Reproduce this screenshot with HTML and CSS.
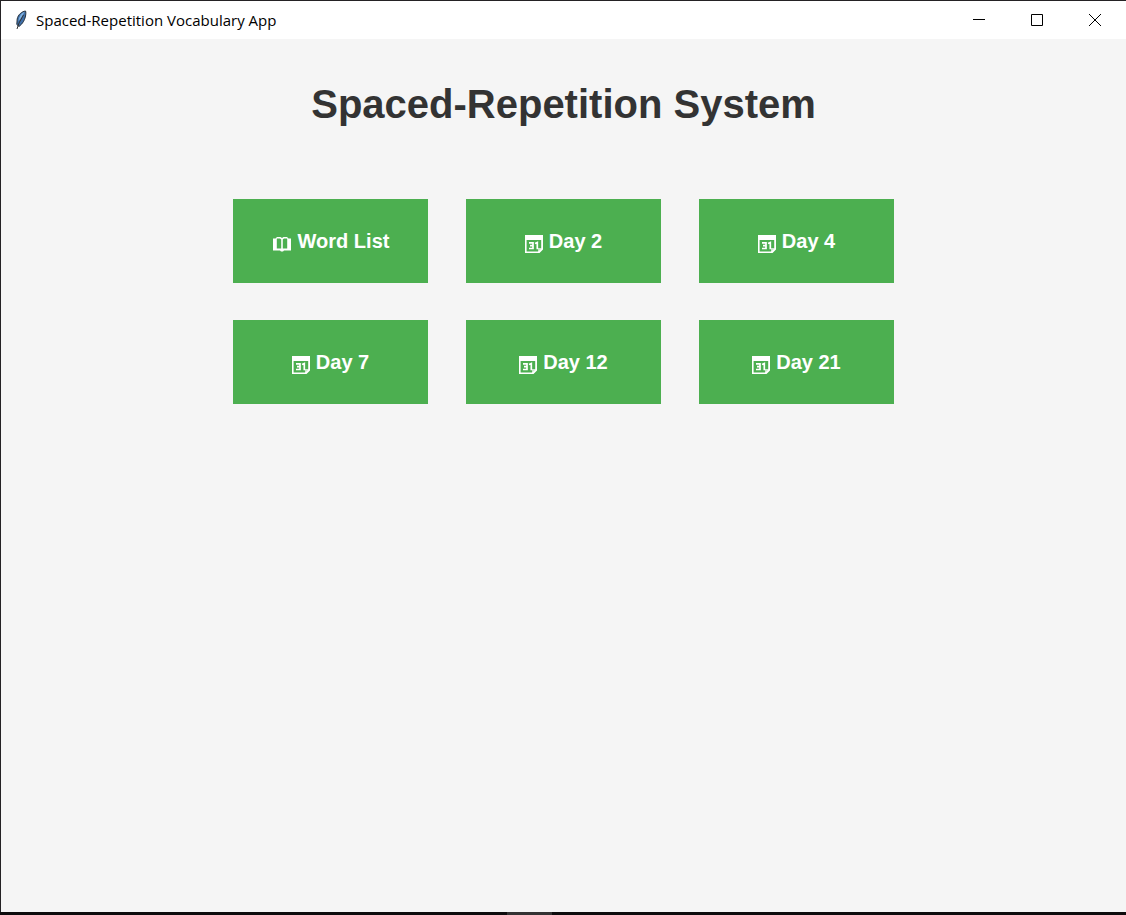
FILE: index.html
```html
<!DOCTYPE html>
<html lang="en">
<head>
<meta charset="utf-8">
<title>Spaced-Repetition Vocabulary App</title>
<link rel="stylesheet" href="styles.css">
</head>
<body>
<svg class="defs" aria-hidden="true">
  <symbol id="book" viewBox="0 0 20 16">
    <path fill="#fff" fill-rule="evenodd" d="M1 2.500H3.500L5 1H8.500L10 2L11.500 1H15L16.500 2.500H19V14.500H12L11 15.500H9L8 14.500H1ZM4.800 2.500V12.500H9.200V3.400L8 2.500ZM10.800 3.400V12.500H15.200V2.500H12Z"/>
  </symbol>
  <symbol id="calendar" viewBox="0 0 18 18">
    <path fill="#fff" fill-rule="evenodd" d="M0 0H18V14.500L14.500 18H0ZM1.600 5V16.400H13L16.200 13.500V5Z"/>
    <path fill="none" stroke="#fff" stroke-width="1.700" d="M4 7.800H8V13.500H4M5 10.600H8M10 8.500L12.300 7.500V14.300"/>
    <path fill="#fff" opacity=".7" d="M13 13H17L13 17Z"/>
  </symbol>
</svg>
<div class="window">
  <header class="titlebar">
    <svg class="feather" viewBox="0 0 14 22" aria-hidden="true">
      <path fill="#3f6fa8" stroke="#26313d" d="M11.500 2C8 2.500 4 5.500 3.200 10L2.800 15.500L5 17.500C9 14.500 10.500 11 11.300 8C12 5 12 3 11.500 2Z"/>
      <path fill="#82b4e2" d="M10.500 3C7 4 5 8 4.500 12L7 9Z"/>
      <path fill="none" stroke="#333" d="M9.500 6L5 14L3 20"/>
    </svg>
    <span class="caption">Spaced-Repetition Vocabulary App</span>
    <button class="control" aria-label="Minimize"><svg class="glyph" viewBox="0 0 12 12"><path d="M0 5.500H12"/></svg></button>
    <button class="control" aria-label="Maximize"><svg class="glyph" viewBox="0 0 12 12"><path d="M.5.5H11.500V11.500H.5Z"/></svg></button>
    <button class="control" aria-label="Close"><svg class="glyph" viewBox="0 0 12 12"><path d="M0 0L12 12M12 0L0 12"/></svg></button>
  </header>
  <main class="content">
    <h1 class="heading">Spaced-Repetition System</h1>
    <div class="grid">
      <button class="card"><svg class="book"><use href="#book"/></svg>Word List</button>
      <button class="card"><svg class="calendar"><use href="#calendar"/></svg>Day 2</button>
      <button class="card"><svg class="calendar"><use href="#calendar"/></svg>Day 4</button>
      <button class="card"><svg class="calendar"><use href="#calendar"/></svg>Day 7</button>
      <button class="card"><svg class="calendar"><use href="#calendar"/></svg>Day 12</button>
      <button class="card"><svg class="calendar"><use href="#calendar"/></svg>Day 21</button>
    </div>
  </main>
</div>
<footer class="taskbar"><div class="task"></div></footer>
</body>
</html>
```
FILE: styles.css
```css
* { box-sizing: border-box; }
body {
  margin: 0;
  min-height: 100vh;
  display: flex;
  flex-direction: column;
  background: #f5f5f5;
}
.defs { display: none; }
.window {
  flex: 1;
  border-top: 1px solid #242224;
  border-left: 1px solid #242224;
}
.titlebar {
  display: flex;
  align-items: center;
  height: 38px;
  padding: 0 2px 0 13px;
  background: #fff;
}
.feather { width: 14px; height: 22px; }
.caption {
  flex: 1;
  padding-left: 8px;
  font: 15px/20px "Open Sans", sans-serif;
  color: #000;
}
.control {
  display: flex;
  align-items: center;
  justify-content: center;
  width: 58px;
  height: 38px;
  padding: 0;
  border: 0;
  background: none;
}
.glyph {
  width: 12px;
  height: 12px;
  fill: none;
  stroke: #000;
}
.content {
  display: flex;
  flex-direction: column;
  align-items: center;
  padding: 41px 16px;
  font-family: "Liberation Sans", Arial, sans-serif;
}
.heading {
  margin: 0 0 71px;
  font-size: 40px;
  line-height: 48px;
  color: #333;
}
.grid {
  display: grid;
  grid-template-columns: repeat(3, 195px);
  gap: 37px 38px;
}
.card {
  display: flex;
  align-items: center;
  justify-content: center;
  gap: 6px;
  height: 84px;
  padding: 0;
  border: 0;
  background: #4caf50;
  color: #fff;
  font: bold 20px/24px "Liberation Sans", Arial, sans-serif;
}
.book { width: 20px; height: 16px; margin-top: 6px; }
.calendar { width: 18px; height: 18px; margin-top: 6px; }
.taskbar { height: 3px; background: #0e0c0d; }
.task { width: 4%; height: 3px; margin-left: 45%; background: #343233; }
```
